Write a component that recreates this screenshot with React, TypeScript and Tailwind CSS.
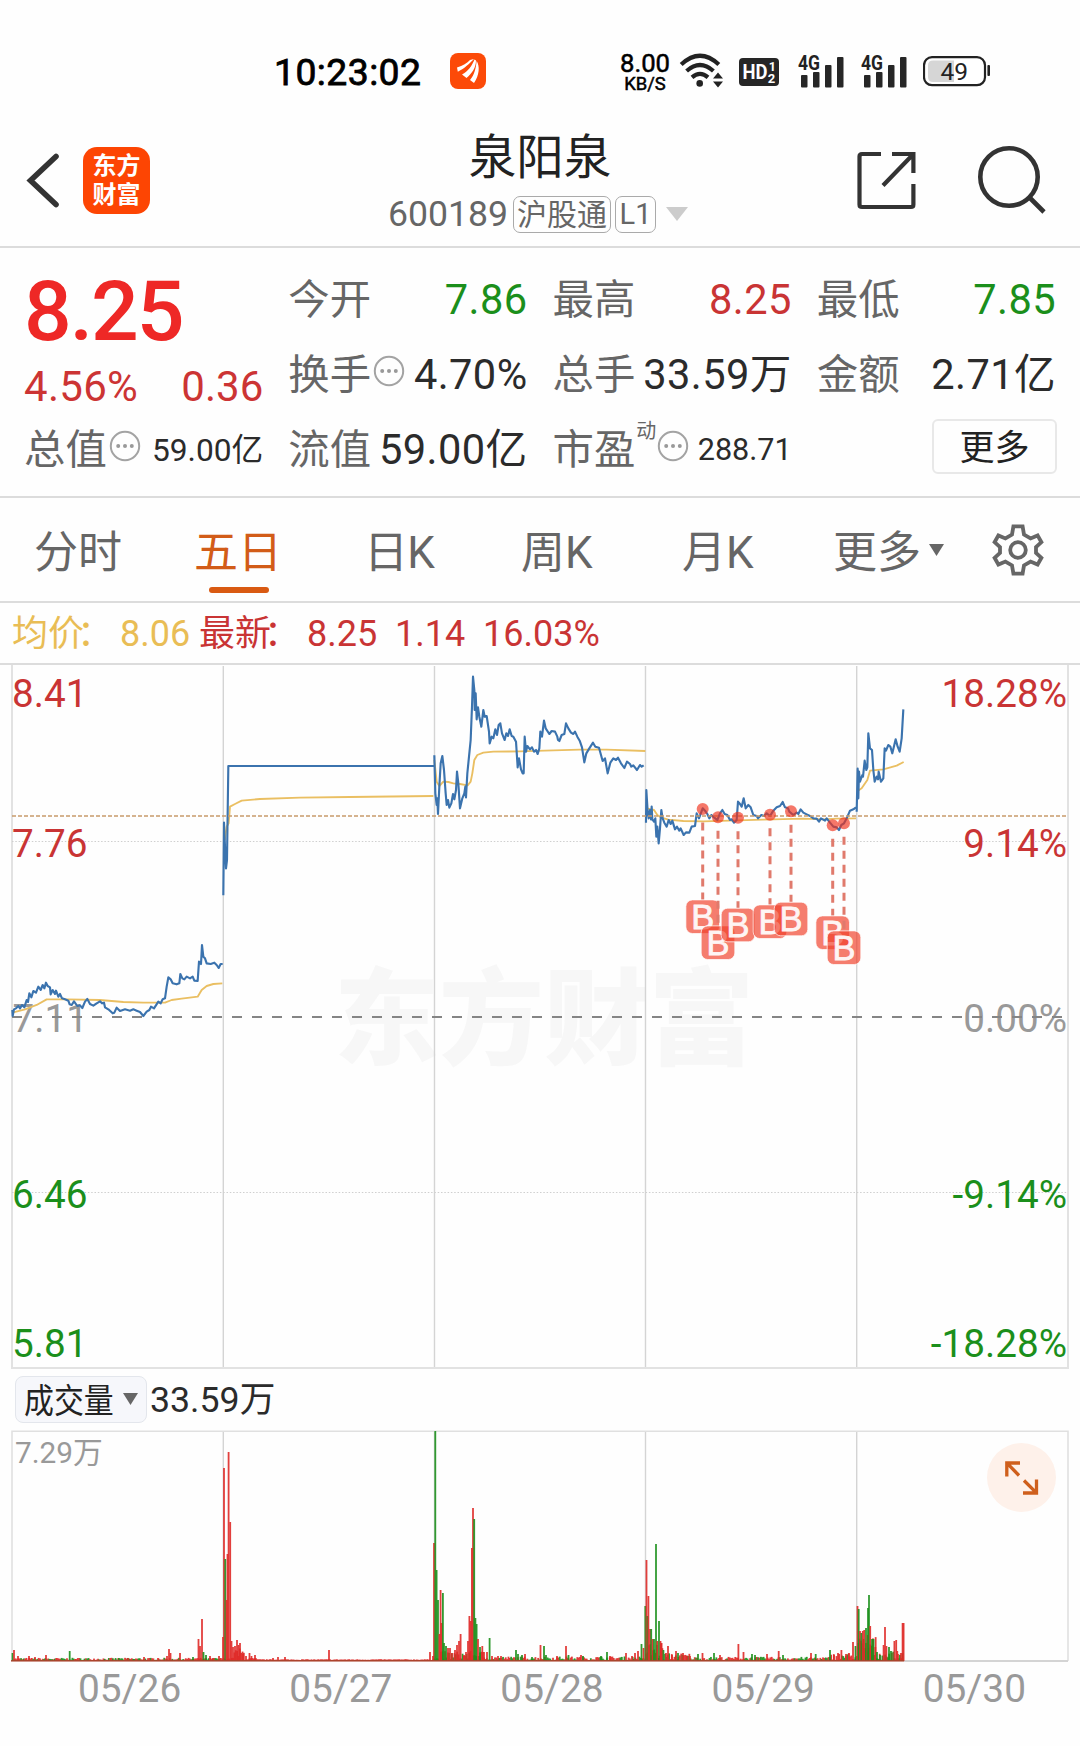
import React from "react";

type Tone = "r" | "g";
type Bar = [number, number, Tone];

const RED = "#c93434";
const GREEN = "#1b8f1b";

// Intraday price and average-price traces, one segment per trading day.
const SEGMENTS: { ox: number; oy: number; price: string; avg: string }[] = [
  {
    ox: 0,
    oy: 660,
    price:
      "37,1050 38,1068 42,1048 48,1045 55,1038 60,1045 66,1035 73,1042 80,1020 84,1026 88,1000 94,1012 100,993 108,998 115,980 122,990 128,975 133,985 138,968 143,978 150,982 152,1003 158,990 165,1002 168,992 175,1010 180,1002 186,1015 195,1018 205,1022 209,1033 215,1035 222,1024 232,1038 240,1036 247,1044 255,1025 262,1017 270,1032 280,1037 290,1030 300,1024 306,1030 312,1028 315,1042 325,1048 338,1060 343,1058 350,1043 360,1053 375,1048 390,1052 400,1048 410,1052 420,1056 430,1068 440,1055 448,1050 453,1040 462,1045 475,1025 482,1030 488,1018 495,1015 500,980 505,952 512,958 518,970 530,973 538,970 541,942 547,955 553,958 560,950 570,955 578,950 583,962 593,963 597,905 603,912 606,855 610,890 615,895 620,910 632,912 643,908 650,915 656,924 662,912 668,912",
    avg: "37,1058 75,1048 110,1035 140,1018 200,1018 300,1020 370,1026 430,1028 495,1028 515,1020 545,1016 593,1010 605,990 620,978 640,972 667,970",
  },
  {
    ox: 0,
    oy: 660,
    price: "670,706 671,600 672,488 675,560 678,625 681,600 685,318 1302,318",
    avg: "674,540 680,500 686,490 690,440 705,432 725,422 780,417 900,413 1050,411 1300,408",
  },
  {
    ox: 420,
    oy: 660,
    price:
      "43,286 46,400 50,435 52,415 54,462 58,380 62,310 67,288 72,330 77,400 80,435 84,420 88,443 94,430 99,402 103,418 108,390 111,335 115,370 120,445 127,415 133,400 136,380 138,412 142,340 147,290 152,240 156,140 159,50 163,90 164,150 167,100 170,178 174,142 178,170 184,200 190,150 194,170 200,168 207,215 209,250 215,230 220,235 226,208 231,225 236,195 241,190 246,220 254,240 259,220 264,228 269,208 275,228 280,230 288,245 293,322 297,295 303,328 308,340 311,340 314,230 318,275 322,258 330,268 336,262 342,275 348,270 353,282 358,265 361,215 366,230 372,182 377,205 388,222 395,213 405,215 412,230 414,240 418,243 425,225 433,222 438,190 445,205 453,218 460,222 465,215 472,230 479,242 486,262 493,307 499,280 508,265 519,248 526,260 537,263 548,303 555,295 563,340 571,308 580,295 588,300 594,293 603,310 613,324 621,305 630,312 634,320 640,316 651,330 660,315 665,320 671,316",
    avg: "43,300 50,365 58,378 70,365 85,366 100,370 120,372 143,376 152,365 157,340 163,300 172,285 190,278 220,275 300,274 400,271 480,269 560,269 676,273",
  },
  {
    ox: 630,
    oy: 680,
    price:
      "48,428 49,330 53,395 56,415 60,390 63,418 65,380 67,418 72,425 76,415 79,470 82,440 86,490 90,445 94,390 98,415 103,428 110,440 116,420 122,432 127,422 135,448 141,440 148,452 152,445 161,465 168,457 178,458 185,440 195,438 200,400 207,415 218,385 225,392 232,402 238,415 244,405 252,412 262,420 270,400 277,390 284,402 292,405 300,420 305,418 312,428 320,420 324,365 330,372 335,380 341,355 347,385 355,375 362,382 370,405 380,408 384,415 394,405 402,408 410,400 420,408 430,392 440,382 450,378 458,366 465,382 474,385 478,395 490,405 500,398 505,402 512,388 520,398 530,403 540,408 550,415 560,416 567,425 573,415 585,422 590,415 600,428 610,440 620,442 627,450 634,435 642,430 650,415 660,392 670,388 678,382",
    avg: "50,385 72,390 82,405 92,412 115,419 160,423 220,424 300,422 400,419 520,416 580,418 620,416 678,415",
  },
  {
    ox: 630,
    oy: 680,
    price:
      "680,395 683,266 685,355 687,275 690,305 697,285 699,290 704,242 709,270 712,262 715,160 720,205 726,210 730,270 734,305 740,290 744,298 746,275 753,305 760,295 764,205 768,212 775,195 781,200 787,220 797,178 803,200 809,215 815,175 820,88",
    avg: "684,332 695,325 712,300 720,272 760,268 800,257 821,246",
  },
];

// Buy markers: x, y of the trade on the curve and centre y of the tag.
const BUYS: [number, number, number][] = [
  [702.7, 809, 916.7],
  [718, 817.3, 942.7],
  [738, 817.7, 925],
  [770, 814.7, 921.7],
  [791, 811.3, 919],
  [832.7, 825.3, 932.7],
  [844, 823.3, 947.7],
];

const SPIKES: Bar[] = [
  [12.5, 8, "g"], [14, 11, "r"], [18, 5, "r"], [29, 5, "r"], [35, 4, "r"], [46, 6, "r"], [69.7, 10, "g"], [76, 2, "r"],
  [119, 3, "g"], [128, 3, "r"], [144, 4, "r"], [158, 3, "r"], [167, 5, "r"], [169, 12, "r"], [170.5, 8, "r"], [180, 8, "r"],
  [193, 4, "g"], [198.5, 22, "r"], [200, 15, "r"], [202, 42, "r"], [203.5, 9, "g"], [206, 6, "g"], [210, 5, "r"], [213, 3, "r"],
  [219, 5, "r"], [223, 24, "r"], [224, 193, "r"], [225.3, 102, "g"], [226.5, 61, "r"], [227.5, 107, "r"], [228.6, 209, "r"],
  [230.2, 139, "r"], [231.5, 20, "r"], [233, 14, "r"], [235, 15, "r"], [237, 21, "r"], [238.5, 16, "r"], [240, 18, "r"], [243, 7, "r"],
  [246, 5, "r"], [249.5, 8, "r"], [251.5, 5, "r"], [255, 6, "r"], [273, 3, "r"], [278, 4, "r"], [285, 4, "r"], [329, 11, "r"],
  [430, 9, "r"], [433, 5, "r"], [434, 118, "r"], [435.3, 230, "g"], [436.6, 91, "g"], [438, 61, "g"], [439.4, 27, "r"],
  [440.6, 71, "r"], [441.6, 38, "r"], [442.9, 68, "g"], [444, 18, "g"], [446, 15, "g"], [448, 13, "r"], [450, 13, "r"], [452, 8, "r"],
  [455, 11, "r"], [457, 16, "r"], [459, 20, "r"], [460.6, 27, "r"], [464, 6, "r"], [466, 9, "r"], [468, 20, "r"], [469.4, 45, "r"],
  [470.7, 40, "r"], [471.9, 113, "r"], [473, 153, "r"], [474.2, 142, "g"], [475.4, 43, "g"], [476.6, 37, "g"], [478, 22, "r"],
  [480, 14, "g"], [482.3, 15, "r"], [484, 9, "r"], [487, 9, "r"], [489.6, 23, "g"], [492, 5, "r"], [498, 5, "r"], [501, 5, "r"],
  [516, 11, "g"], [518, 7, "g"], [522, 6, "g"], [525, 7, "r"], [532, 4, "g"], [540.5, 16, "r"], [544, 15, "g"], [546, 6, "g"], [557, 5, "r"],
  [566, 15, "r"], [568.5, 6, "g"], [581, 6, "r"], [583, 5, "g"], [601, 5, "g"], [607, 9, "g"], [610, 5, "r"], [626, 8, "r"],
  [632, 5, "r"], [635, 8, "r"], [638, 10, "r"], [641.5, 17, "g"], [643.5, 13, "r"], [645.3, 55, "g"], [646.5, 101, "r"], [647.5, 45, "g"],
  [648.4, 65, "r"], [650, 32, "r"], [651.2, 32, "g"], [652.6, 22, "r"], [654, 22, "g"], [656, 117, "g"], [657.3, 20, "r"],
  [659, 40, "g"], [660.5, 20, "r"], [661.6, 18, "r"], [663.4, 11, "g"], [666, 8, "r"], [668, 15, "r"], [672, 6, "r"], [676, 10, "r"],
  [678, 8, "g"], [683, 8, "r"], [687, 5, "r"], [690, 5, "r"], [698, 7, "g"], [702.5, 8, "r"], [714, 8, "g"], [720, 6, "r"], [738.4, 17, "r"],
  [743.5, 9, "r"], [752, 7, "g"], [755, 6, "g"], [767, 7, "r"], [778.7, 10, "r"], [783, 6, "g"], [811, 8, "r"], [815.7, 7, "g"],
  [830, 11, "g"], [834, 6, "r"], [838, 8, "r"], [841.4, 11, "r"], [846, 7, "r"], [849, 8, "r"], [853, 19, "r"], [855.5, 15, "g"],
  [857.5, 55, "r"], [858.7, 52, "g"], [860, 30, "r"], [861.4, 28, "g"], [862.8, 30, "r"], [864.2, 31, "r"], [866, 33, "g"], [867.4, 26, "r"],
  [868, 53, "g"], [869, 66, "g"], [870.2, 35, "r"], [872, 22, "g"], [873.5, 22, "g"], [875.3, 14, "r"], [877, 9, "g"], [880, 6, "g"], [883.6, 16, "r"],
  [885, 34, "r"], [886.4, 15, "r"], [889, 14, "g"], [891, 10, "g"], [894.4, 20, "r"], [896.2, 21, "r"], [898, 7, "r"], [901, 8, "r"],
  [902.6, 38, "r"], [903.6, 38, "r"],
];

function quietBars(): Bar[] {
  const out: Bar[] = [];
  let seed = 7;
  for (let x = 13; x < 904; x += 1.35) {
    seed = (seed * 16807) % 2147483647;
    const a = seed / 2147483647;
    seed = (seed * 16807) % 2147483647;
    const b = seed / 2147483647;
    const locked = x > 257 && x < 432;
    let top = 2.2;
    if (locked) top = 0.8;
    else if (x > 232 && x < 245) top = 12;
    else if (x > 440 && x < 484) top = 9;
    else if (x > 484 && x < 640) top = 3.6;
    else if (x > 645 && x < 663) top = 18;
    else if (x > 663 && x < 692) top = 7;
    else if (x > 830 && x < 857) top = 7;
    else if (x >= 857 && x < 876) top = 24;
    else if (x >= 876) top = 9;
    else if (x > 692) top = 3.2;
    const tone: Tone = locked || (x > 226 && x < 257) || b > 0.45 ? "r" : "g";
    out.push([x, 1 + a * top, tone]);
  }
  return out;
}

const BARS = [...quietBars(), ...SPIKES];
const DAY_LINES = [223.3, 434.5, 645.5, 856.7];

function MoreDots() {
  return (
    <svg width="32" height="32" viewBox="0 0 32 32" className="shrink-0">
      <circle cx="16" cy="16" r="14.2" fill="none" stroke="#a3a3a3" strokeWidth="2" />
      <circle cx="9.2" cy="16" r="2" fill="#999" />
      <circle cx="16" cy="16" r="2" fill="#999" />
      <circle cx="22.8" cy="16" r="2" fill="#999" />
    </svg>
  );
}

function Stat({ label, value, tone, dots }: { label: string; value: string; tone: string; dots?: boolean }) {
  return (
    <div className="flex h-[75px] items-center justify-between">
      <div className="flex items-center text-[41.4px] text-[#666]">
        {label}
        {dots && (
          <span className="-mt-2.5 ml-0.5 flex">
            <MoreDots />
          </span>
        )}
      </div>
      <span className={`-mt-[2px] text-[41.6px] tracking-[0.4px] ${tone}`}>{value}</span>
    </div>
  );
}

function Signal() {
  return (
    <svg width="47" height="36" viewBox="0 -2 47 36">
      <text x="0" y="15.5" fontFamily="Roboto" fontWeight="700" fontSize="19.5" textLength="22" lengthAdjust="spacingAndGlyphs" fill="#222">4G</text>
      <g fill="#262626">
        <rect x="3" y="21" width="6.5" height="12.5" rx="1" />
        <rect x="15" y="18" width="6.5" height="15.5" rx="1" />
        <rect x="27" y="11" width="6.5" height="22.5" rx="1" />
        <rect x="39" y="3" width="6.5" height="30.5" rx="1" />
      </g>
    </svg>
  );
}

function StatusBar() {
  return (
    <div className="flex h-[142px] shrink-0 items-start pt-[52px] text-black">
      <span className="ml-[274px] flex h-[41px] w-[176px] items-center text-[37.3px] tracking-[0.45px] [-webkit-text-stroke:0.8px_black]">10:23:02</span>
      <svg width="36" height="38" viewBox="0 0 36 38" className="shrink-0">
        <rect y="1" width="36" height="36" rx="8" fill="#fc4a08" />
        <g fill="#fff">
          <path d="M7 15.5C13 13.5 17 11 20 8L24 7C19 12 15 16 7.8 19.8Z" />
          <path d="M12 22.5C18 19.5 22 13.5 24.5 7.4L26 8.6C26 15.6 22 21.6 16.5 26Z" />
          <path d="M20 28C24.3 23 26 16 26.6 9C30 14 29.5 23 24 31Z" />
        </g>
      </svg>
      <div className="ml-[133px] flex w-[52px] flex-col items-center [-webkit-text-stroke:0.5px_black]">
        <span className="h-[23px] text-[25.7px] leading-[22px]">8.00</span>
        <span className="text-[18.4px] leading-[17px]">KB/S</span>
      </div>
      <svg width="46" height="38" viewBox="0 0 46 38" className="ml-[8px]">
        <g fill="none" stroke="#222" strokeWidth="4.2">
          <path d="M2.2 12.5Q21 -5 39.8 12.5" />
          <path d="M7.6 19Q21 7 34.4 19" />
          <path d="M13 25.3Q21 18.5 29 25.3" />
        </g>
        <circle cx="20.7" cy="31.4" r="3.3" fill="#222" />
        <path d="M34 26.5L39 20.5L44 26.5ZM34 29.5H44L39 35.5Z" fill="#222" />
      </svg>
      <svg width="40" height="38" viewBox="0 0 40 38" className="ml-[14px]">
        <rect y="6" width="40" height="28" rx="4" fill="#262626" />
        <g fill="#fff" fontFamily="Roboto" fontWeight="700">
          <text x="3.5" y="27" fontSize="20.5" textLength="25" lengthAdjust="spacingAndGlyphs">HD</text>
          <text x="29.8" y="19" fontSize="12.5">1</text>
          <text x="28.8" y="31" fontSize="13">2</text>
        </g>
      </svg>
      <div className="ml-[19px] flex gap-4">
        <Signal />
        <Signal />
      </div>
      <svg width="68" height="38" viewBox="0 0 68 38" className="ml-[15px]">
        <rect x="1" y="5.2" width="61" height="28" rx="8" fill="#fff" stroke="#222" strokeWidth="2.2" />
        <path d="M10 8.5H31V30H10Q5 30 5 25V13.5Q5 8.5 10 8.5Z" fill="#d6d6d6" />
        <rect x="64.4" y="13" width="2.6" height="11" rx="1" fill="#222" />
        <text x="17.5" y="28" fontFamily="Roboto" fontSize="24.5" fill="#222">49</text>
      </svg>
    </div>
  );
}

function Header() {
  return (
    <header className="flex h-[106px] shrink-0 border-b-2 border-[#dcdcdc]">
      <svg width="60" height="76" viewBox="0 0 60 76" className="shrink-0">
        <path d="M56 14.5L30.5 38.5L56 62.5" fill="none" stroke="#333" strokeWidth="5.6" strokeLinecap="round" />
      </svg>
      <div className="ml-[23px] mt-[5px] flex h-[67px] w-[67px] shrink-0 flex-col items-center justify-center gap-[5px] rounded-[14px] bg-[#fd4503] text-[24px] font-bold text-white">
        <span>东方</span>
        <span>财富</span>
      </div>
      <div className="ml-[219px] flex w-[342px] shrink-0 flex-col items-center">
        <div className="-mt-[8px] text-[47.5px] leading-[48px] text-[#222]">泉阳泉</div>
        <div className="mt-[13px] flex w-full items-center text-[#666]">
          <span className="ml-[19px] w-[125px] text-[35.6px] leading-[38px]">600189</span>
          <span className="flex h-[37px] w-[98px] shrink-0 items-center justify-center rounded-[7px] border-[1.5px] border-[#aaa] pt-[2px] text-[30px]">沪股通</span>
          <span className="ml-[4px] flex h-[37px] w-[41px] shrink-0 items-center justify-center rounded-[7px] border-[1.5px] border-[#aaa] pt-px text-[29px]">L1</span>
          <svg width="22" height="14" viewBox="0 0 22 14" className="ml-[10px] shrink-0">
            <path d="M0 0H22L11 14Z" fill="#ccc" />
          </svg>
        </div>
      </div>
      <svg width="60" height="60" viewBox="0 0 60 60" className="ml-[145px] mt-[8px] shrink-0">
        <g fill="none" stroke="#333" strokeWidth="4.2">
          <path d="M25 4H6Q3.5 4 3.5 6.5V54.5Q3.5 57 6 57H55Q57.4 57 57.4 54.5V34" />
          <path d="M36 4H57.4V23M56.5 5L27 35.5" />
        </g>
      </svg>
      <svg width="70" height="72" viewBox="0 0 70 72" className="ml-[61px] mt-[4px] shrink-0">
        <g fill="none" stroke="#333" strokeWidth="4.6">
          <circle cx="32" cy="31" r="28.7" />
          <path d="M52.5 51.5L67 66" />
        </g>
      </svg>
    </header>
  );
}

function Quote() {
  return (
    <section className="grid h-[250px] shrink-0 grid-cols-4 gap-x-[25px] border-b-2 border-[#dcdcdc] px-[24px] pt-[15px]">
      <div>
        <div className="flex h-[98px] items-center text-[84px] font-medium tracking-[-2px] text-[#ee2826]">8.25</div>
        <div className="flex h-[52px] items-center justify-between text-[42px] text-[#cc3434]">
          <span className="tracking-[0.3px]">4.56%</span>
          <span>0.36</span>
        </div>
        <div className="flex h-[75px] items-center">
          <span className="text-[41.4px] text-[#666]">总值</span>
          <span className="-mt-2.5 ml-0.5 flex">
            <MoreDots />
          </span>
          <span className="ml-auto text-[31.7px] text-[#2b2b2b]">59.00亿</span>
        </div>
      </div>
      <div>
        <Stat label="今开" value="7.86" tone="text-[#1b8f1b]" />
        <Stat label="换手" value="4.70%" tone="text-[#2b2b2b]" dots />
        <Stat label="流值" value="59.00亿" tone="text-[#2b2b2b]" />
      </div>
      <div>
        <Stat label="最高" value="8.25" tone="text-[#c93434]" />
        <Stat label="总手" value="33.59万" tone="text-[#2b2b2b]" />
        <div className="flex h-[75px] items-center">
          <span className="text-[41.4px] text-[#666]">市盈</span>
          <span className="-mt-10 ml-px text-[20px] text-[#666]">动</span>
          <span className="-mt-2.5 ml-px flex">
            <MoreDots />
          </span>
          <span className="ml-auto text-[30.6px] text-[#2b2b2b]">288.71</span>
        </div>
      </div>
      <div>
        <Stat label="最低" value="7.85" tone="text-[#1b8f1b]" />
        <Stat label="金额" value="2.71亿" tone="text-[#2b2b2b]" />
        <div className="mt-[6px] -mr-px ml-auto flex h-[55px] w-[125px] items-center justify-center rounded-[6px] border-2 border-[#e8e8e8] pt-[3px] text-[35px] text-[#222]">更多</div>
      </div>
    </section>
  );
}

function Tabs() {
  return (
    <nav className="flex h-[105px] shrink-0 items-center border-b-2 border-[#dcdcdc] text-[44px] text-[#666]">
      <span className="ml-[34px] w-[160px] pt-[7px]">分时</span>
      <div className="flex h-full w-[170px] flex-col text-[#d25c18]">
        <span className="mt-[33px]">五日</span>
        <span className="ml-[15px] mt-[12px] h-[6px] w-[60px] rounded-full bg-[#d95a12]" />
      </div>
      <span className="w-[157px] pt-[7px] tracking-[-0.8px]">日K</span>
      <span className="w-[161px] pt-[7px]">周K</span>
      <span className="w-[151px] pt-[7px]">月K</span>
      <span className="w-[96px] pt-[7px]">更多</span>
      <svg width="15" height="12" viewBox="0 0 15 12">
        <path d="M0 0H15L7.5 12Z" fill="#666" />
      </svg>
      <svg width="54" height="54" viewBox="-27 -27 54 54" className="ml-[47px]">
        <g fill="none" stroke="#666" strokeWidth="3.8">
          <path d="M-4.6 -23.6H4.6L6 -15.4L12.6 -11.6L19.6 -14.6L23.4 -7.8L18 -3V3L23.4 7.8L19.6 14.6L12.6 11.6L6 15.4L4.6 23.6H-4.6L-6 15.4L-12.6 11.6L-19.6 14.6L-23.4 7.8L-18 3V-3L-23.4 -7.8L-19.6 -14.6L-12.6 -11.6L-6 -15.4Z" />
          <circle r="7.8" />
        </g>
      </svg>
    </nav>
  );
}

function Legend() {
  return (
    <div className="flex h-[62px] shrink-0 items-center border-b-2 border-[#dcdcdc] pl-[12px] pt-[2px] text-[36px] text-[#c93434]">
      <span className="w-[108px] whitespace-nowrap text-[#e9bd55]">均价<span className="-ml-[7px]">：</span></span>
      <span className="w-[79px] text-[#e9bd55]">8.06</span>
      <span className="w-[108px] whitespace-nowrap">最新<span className="-ml-[7px]">：</span></span>
      <span className="w-[88px]">8.25</span>
      <span className="w-[88px]">1.14</span>
      <span>16.03%</span>
    </div>
  );
}

function PriceChart() {
  return (
    <div className="relative h-[704px] shrink-0 text-[38.7px]">
      <div className="absolute left-[334px] top-[299px] flex h-[112px] items-center text-[105px] font-black text-[#f7f7f7]">东方财富</div>
      <svg width="1080" height="704" viewBox="0 665 1080 704" className="absolute inset-0">
        <g stroke="#d4d4d4" strokeWidth="1.4">
          {DAY_LINES.map((x) => (
            <line key={x} x1={x} x2={x} y1="666" y2="1368" />
          ))}
        </g>
        <path d="M12 665V1368H1068V665" fill="none" stroke="#e2e2e2" strokeWidth="2" />
        <path d="M12 841.5H1068M12 1192.5H1068" stroke="#cfcfcf" strokeWidth="1" strokeDasharray="1.5 1.8" />
        <text x="12.5" y="1032" fontFamily="Roboto" fontSize="38.7" fill="#999">7.11</text>
        <text x="1067" y="1032" textAnchor="end" fontFamily="Roboto" fontSize="38.7" fill="#999">0.00%</text>
        <path d="M12 1017H1068" stroke="#858585" strokeWidth="2" strokeDasharray="10 10" />
        {SEGMENTS.map((s, i) => (
          <g key={i} transform={`translate(${s.ox} ${s.oy}) scale(0.33333)`} fill="none" strokeLinejoin="round">
            <polyline points={s.avg} stroke="#eabf62" strokeWidth="5.6" />
            <polyline points={s.price} stroke="#3b73ae" strokeWidth="6.4" />
          </g>
        ))}
        <path d="M12 816H1068" stroke="#c79b6b" strokeWidth="1.6" strokeDasharray="4 2" />
        {BUYS.map(([x, y, by]) => (
          <g key={x}>
            <circle cx={x} cy={y} r="6" fill="#f0301c" fillOpacity="0.66" />
            <line x1={x} x2={x} y1={y + 13.5} y2={by - 17} stroke="#e07a6c" strokeWidth="3" strokeDasharray="8 6" />
            <rect x={x - 16.8} y={by - 16.8} width="33.6" height="33.6" rx="6.5" fill="#f0402a" fillOpacity="0.68" stroke="#fff" strokeOpacity="0.7" strokeWidth="1" />
            <text x={x} y={by + 12} textAnchor="middle" fontFamily="Liberation Sans" fontSize="34.5" fill="#fff" stroke="#fff" strokeWidth="0.8" opacity="0.93">B</text>
          </g>
        ))}
      </svg>
      <div className="absolute inset-y-0 left-[12px] text-[#c93434]">
        <div className="mt-[10px]">8.41</div>
        <div className="mt-[111px]">7.76</div>
        <div className="mt-[313px] text-[#1b8f1b]">6.46</div>
        <div className="mt-[110px] text-[#1b8f1b]">5.81</div>
      </div>
      <div className="absolute inset-y-0 right-[13px] text-right text-[#c93434]">
        <div className="mt-[10px]">18.28%</div>
        <div className="mt-[111px]">9.14%</div>
        <div className="mt-[313px] text-[#1b8f1b]">-9.14%</div>
        <div className="mt-[110px] text-[#1b8f1b]">-18.28%</div>
      </div>
    </div>
  );
}

function Volume() {
  return (
    <section className="flex shrink-0 flex-col">
      <div className="flex h-[60px] items-center pl-[15px] text-[35.7px] text-[#2b2b2b]">
        <div className="flex h-[47px] w-[132px] items-center rounded-[8px] border-[1.5px] border-[#e3e6ec] bg-[#f6f7fb]">
          <span className="ml-[8px] mt-[3px] w-[99px] origin-left scale-x-[0.88] whitespace-nowrap text-[34px] text-[#222]">成交量</span>
          <svg width="15" height="12" viewBox="0 0 15 12" className="-mt-px shrink-0">
            <path d="M0 0H15L7.5 12Z" fill="#666" />
          </svg>
        </div>
        <span className="ml-[3px] mt-[3px]">33.59万</span>
      </div>
      <div className="relative h-[234px]">
        <svg width="1080" height="234" viewBox="0 1429 1080 234" className="absolute inset-0">
          <g stroke="#d4d4d4" strokeWidth="1.4">
            {DAY_LINES.map((x) => (
              <line key={x} x1={x} x2={x} y1="1431" y2="1660" />
            ))}
          </g>
          <path d="M12 1661V1431.3H1068V1661" fill="none" stroke="#e0e0e0" strokeWidth="1.6" />
          <path d="M904 1661H1068" stroke="#d4d4d4" strokeWidth="2" />
          {BARS.map(([x, h, t], i) => (
            <rect key={i} x={x - 0.9} y={1661 - h} width="1.8" height={h} fill={t === "r" ? "#df2a28" : GREEN} fillOpacity="0.9" />
          ))}
          <path d="M11 1660.7H904" stroke={RED} strokeWidth="1.6" strokeOpacity="0.85" />
          <path d="M11 1660.7H904" stroke="#7a5a20" strokeWidth="1.4" strokeOpacity="0.4" />
        </svg>
        <div className="absolute left-[15px] top-[9px] text-[29.8px] text-[#999]">7.29万</div>
        <div className="absolute left-[987px] top-[14px] flex h-[69px] w-[69px] items-center justify-center rounded-full bg-[#fef1ea]">
          <svg width="36" height="36" viewBox="0 0 36 36">
            <path d="M16 3H2.8V16.5M3.5 3.7L15 15.5M19 33H32.5V19.5M31.7 32.2L20 20.5" fill="none" stroke="#cf5f1c" strokeWidth="3.3" />
          </svg>
        </div>
      </div>
      <div className="flex h-[52px] items-center pl-[24px] text-[38.8px] text-[#999]">
        {["05/26", "05/27", "05/28", "05/29", "05/30"].map((d) => (
          <span key={d} className="w-[211.2px] shrink-0 text-center">{d}</span>
        ))}
      </div>
    </section>
  );
}

export default function App() {
  return (
    <main lang="zh-CN" className="flex h-[1746px] w-[1080px] flex-col overflow-hidden bg-[#fefefe] font-['Roboto','Noto_Sans_CJK_SC',sans-serif] leading-none">
      <StatusBar />
      <Header />
      <Quote />
      <Tabs />
      <Legend />
      <PriceChart />
      <Volume />
    </main>
  );
}
